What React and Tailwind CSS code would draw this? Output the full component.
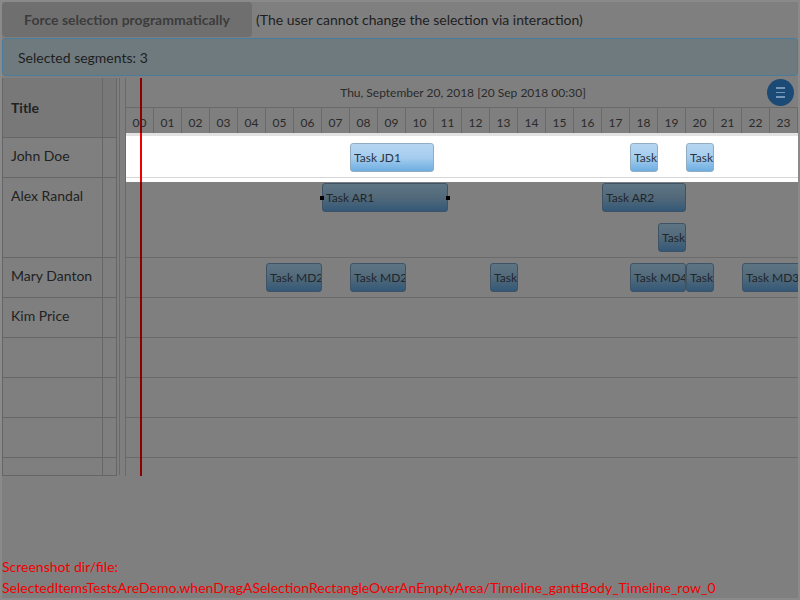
import React from "react";

const HOURS = Array.from({ length: 24 }, (_, i) => String(i).padStart(2, "0"));
const HOUR_W = 28;

// tasks per row: [label, startHour, duration, lane, selected]
const ROWS = [
  { name: "John Doe", h: 40, highlight: true, tasks: [["Task JD1", 8, 3, 0], ["Task", 18, 1, 0], ["Task", 20, 1, 0]] },
  { name: "Alex Randal", h: 80, tasks: [["Task AR1", 7, 4.5, 0, true], ["Task AR2", 17, 3, 0], ["Task", 19, 1, 1]] },
  { name: "Mary Danton", h: 40, tasks: [["Task MD2", 5, 2, 0], ["Task MD2", 8, 2, 0], ["Task", 13, 1, 0], ["Task MD4", 18, 2, 0], ["Task", 20, 1, 0], ["Task MD3", 22, 3, 0]] },
  { name: "Kim Price", h: 40, tasks: [] },
  { name: "", h: 40, tasks: [] },
  { name: "", h: 40, tasks: [] },
  { name: "", h: 40, tasks: [] },
  { name: "", h: 18, tasks: [], last: true },
];

function Task({ label, start, dur, lane, selected, light }) {
  const style = { left: start * HOUR_W, width: dur * HOUR_W, top: 5 + lane * 40 };
  return (
    <div
      className={
        "absolute h-[29px] rounded-[3px] border flex items-center pl-[3px] text-[12px] whitespace-nowrap " +
        (light
          ? "bg-gradient-to-b from-[#b5d6f1] via-[#a6cdee] to-[#6caee1] border-[#90adc4] text-[#2a3540]"
          : "bg-gradient-to-b from-[#5d7583] via-[#52697a] to-[#335877] border-[#3e5365] text-[#1f262c]")
      }
      style={style}
    >
      <span className="overflow-hidden">{label}</span>
      {selected && (
        <>
          <span className="absolute left-[-3px] top-[12px] w-[4px] h-[4px] bg-black" />
          <span className="absolute right-[-3px] top-[12px] w-[4px] h-[4px] bg-black" />
        </>
      )}
    </div>
  );
}

export default function App() {
  return (
    <div className="w-[800px] h-[600px] border-2 border-[#8a8a8a] bg-[#7f7f7f] flex flex-col font-['Lato',sans-serif] text-[#1e1e1e] overflow-hidden">
      {/* toolbar */}
      <div className="flex items-center h-[35px] shrink-0">
        <div className="w-[250px] h-full rounded-[4px] bg-[#6f6f6f] flex items-center justify-center font-bold text-[14px] text-[#3c3c3c]">
          Force selection programmatically
        </div>
        <span className="ml-[4px] text-[14px]">(The user cannot change the selection via interaction)</span>
      </div>

      <div className="mt-px h-[38px] shrink-0 rounded-[4px] border border-[#4b7c9b] bg-[#6f7a7e] flex items-center px-[15px] text-[14px]">
        Selected segments: 3
      </div>

      {/* gantt */}
      <div className="mt-[2px] h-[398px] shrink-0 flex">
        {/* left table */}
        <div className="w-[115px] flex flex-col">
          <div className="flex h-[60px] border-b border-[#666]">
            <div className="w-[101px] border-x border-[#666] bg-[#787878] flex items-center pl-[8px] font-bold text-[14px] text-[#222]">
              Title
            </div>
            <div className="w-[14px] border-r border-[#666] bg-[#787878]" />
          </div>
          {ROWS.map((r, i) => (
            <div key={i} className="flex border-b border-[#666]" style={{ height: r.h }}>
              <div className="w-[101px] border-x border-[#666] pl-[8px] pt-[7px] text-[14px] text-[#222]">{r.name}</div>
              <div className="w-[14px] border-r border-[#666]" />
            </div>
          ))}
        </div>

        {/* splitter */}
        <div className="w-[8px] flex">
          <div className="w-[2px]" />
          <div className="w-[1px] bg-[#6a6a6a] h-[397px]" />
        </div>

        {/* timeline */}
        <div className="w-[673px] border-l border-[#6a6a6a] relative flex flex-col overflow-hidden">
          <div className="h-[29px] shrink-0 flex items-center justify-center pl-[2px] text-[12px] text-[#2a2a2a] relative">
            Thu, September 20, 2018 [20 Sep 2018 00:30]
            <div className="absolute right-[4px] top-[1px] w-[27px] h-[27px] rounded-full bg-[#1c4a76] flex flex-col items-center justify-center gap-[3px]">
              <span className="w-[9px] h-[1.5px] bg-[#7596b6]" />
              <span className="w-[9px] h-[1.5px] bg-[#7596b6]" />
              <span className="w-[9px] h-[1.5px] bg-[#7596b6]" />
            </div>
          </div>
          <div className="h-[27px] shrink-0 border-t border-[#6a6a6a] flex">
            {HOURS.map((h) => (
              <div
                key={h}
                className="w-[28px] shrink-0 border-r border-[#6a6a6a] flex items-center justify-center pt-[4px] text-[12px] text-[#2a2a2a]"
              >
                {h}
              </div>
            ))}
          </div>
          <div className="h-[4px] shrink-0" />
          {ROWS.map((r, i) => (
            <div
              key={i}
              className={"relative shrink-0 " + (r.last ? "" : "border-b border-[#6a6a6a]") + (r.highlight ? " z-10" : "")}
              style={{ height: r.h }}
            >
              {r.highlight && (
                <div className="absolute left-0 right-0 top-[-5px] bottom-[-5px] bg-white">
                  <div className="h-[3px] bg-[#e2e2e2]" />
                  <div className="absolute left-0 right-0 top-[44px] h-[1px] bg-[#d6d6d6]" />
                  <div className="absolute left-[14px] top-0 bottom-0 w-[2px] bg-[#ee0000]" />
                </div>
              )}
              {r.tasks.map(([label, start, dur, lane, selected], j) => (
                <Task key={j} label={label} start={start} dur={dur} lane={lane} selected={selected} light={r.highlight} />
              ))}
            </div>
          ))}
          <div className="absolute left-[14px] top-0 bottom-0 w-[2px] bg-[#8e0000]" />
        </div>
      </div>

      {/* footer */}
      <div className="flex-1 flex flex-col justify-end text-[14px] leading-[21px] text-[#f00000]">
        <div>Screenshot dir/file:</div>
        <div>SelectedItemsTestsAreDemo.whenDragASelectionRectangleOverAnEmptyArea/Timeline_ganttBody_Timeline_row_0</div>
      </div>
    </div>
  );
}
